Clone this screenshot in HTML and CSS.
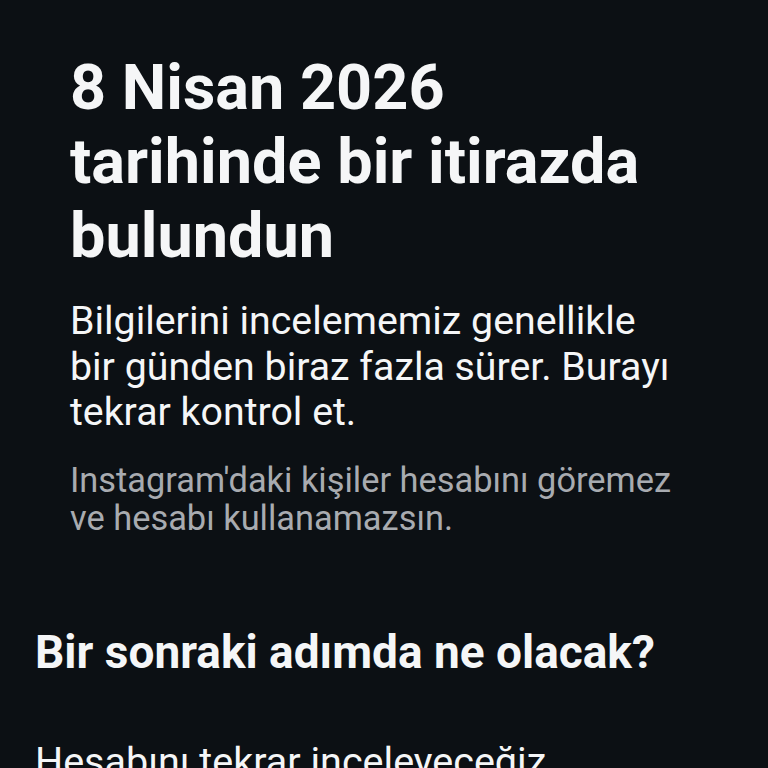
FILE: index.html
```html
<!DOCTYPE html>
<html lang="tr">
<head>
<meta charset="utf-8">
<link rel="stylesheet" href="styles.css">
</head>
<body>
<main class="screen">
  <section class="intro">
    <h1 class="title">8 Nisan 2026<br>tarihinde bir itirazda<br>bulundun</h1>
    <p class="lead">Bilgilerini incelememiz genellikle bir günden biraz fazla sürer. Burayı tekrar kontrol et.</p>
    <p class="note">Instagram'daki kişiler hesabını göremez ve hesabı kullanamazsın.</p>
  </section>
  <section class="next">
    <h2 class="next-title">Bir sonraki adımda ne olacak?</h2>
    <p class="next-text">Hesabını tekrar inceleyeceğiz</p>
  </section>
</main>
</body>
</html>
```
FILE: styles.css
```css
html, body {
  margin: 0;
  padding: 0;
  background: #0c1014;
  height: 100%;
  overflow: hidden;
}
.screen {
  font-family: Roboto, "Noto Sans", sans-serif;
  color: #f5f6f7;
}
.intro {
  padding: 51px 0 0 70px;
  width: 620px;
}
.title {
  margin: 0;
  font-size: 63px;
  line-height: 74px;
  font-weight: 700;
}
.lead {
  margin: 26px 0 0;
  max-width: 608px;
  font-size: 39.3px;
  line-height: 45.5px;
}
.note {
  margin: 25px 0 0;
  font-size: 34.4px;
  line-height: 38px;
  color: #a8abb0;
}
.next {
  padding: 88px 40px 0 35px;
}
.next-title {
  margin: 0;
  font-size: 46px;
  line-height: 54px;
  font-weight: 700;
}
.next-text {
  margin: 60px 0 0;
  font-size: 39.5px;
  line-height: 46px;
}
```
